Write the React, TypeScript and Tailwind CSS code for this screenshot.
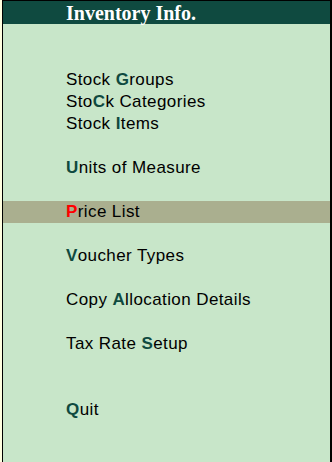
const ITEMS: ({ pre: string; key: string; post: string } | null)[] = [
  { pre: 'Stock ', key: 'G', post: 'roups' },
  { pre: 'Sto', key: 'C', post: 'k Categories' },
  { pre: 'Stock ', key: 'I', post: 'tems' },
  null,
  { pre: '', key: 'U', post: 'nits of Measure' },
  null,
  { pre: '', key: 'P', post: 'rice List' },
  null,
  { pre: '', key: 'V', post: 'oucher Types' },
  null,
  { pre: 'Copy ', key: 'A', post: 'llocation Details' },
  null,
  { pre: 'Tax Rate ', key: 'S', post: 'etup' },
  null,
  null,
  { pre: '', key: 'Q', post: 'uit' },
];

const SELECTED = 6;

export default function App() {
  return (
    <div className="w-[332px] h-[462px] bg-[#ffffe0] pl-[2px] overflow-hidden">
      <div className="h-full w-[330px] border-l border-r-2 border-t border-black bg-[#c8e6c9] flex flex-col">
        <div className="h-[23px] bg-[#0f4a40] pl-[63px] flex items-center">
          <span
            className="text-white font-bold text-[20px] leading-none"
            style={{ fontFamily: '"Liberation Serif", serif' }}
          >
            Inventory Info.
          </span>
        </div>
        <div className="pt-[45px]" style={{ fontFamily: '"Liberation Sans", sans-serif' }}>
          {ITEMS.map((it, i) =>
            it ? (
              <div
                key={i}
                className={`h-[22px] flex items-center pl-[63px] text-[17px] tracking-[0.4px] text-black ${i === SELECTED ? 'bg-[#aaaf8f]' : ''}`}
              >
                <span className="whitespace-pre">{it.pre}</span>
                <span className={`font-bold ${i === SELECTED ? 'text-[#ff0000]' : 'text-[#0f4a40]'}`}>{it.key}</span>
                <span className="whitespace-pre">{it.post}</span>
              </div>
            ) : (
              <div key={i} className="h-[22px]" />
            ),
          )}
        </div>
      </div>
    </div>
  );
}
